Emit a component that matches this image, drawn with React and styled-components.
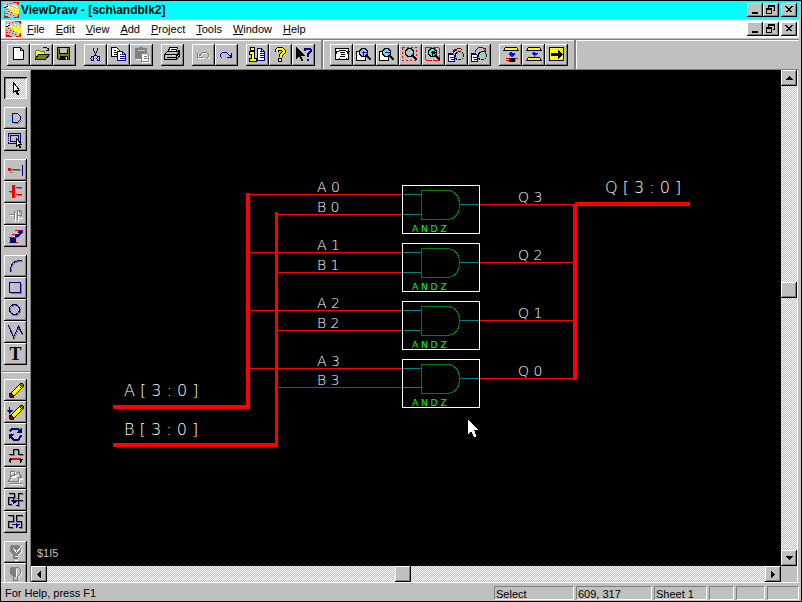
// App.jsx

import React, { useState } from 'react'
import styled, { createGlobalStyle, css } from 'styled-components'

const GlobalStyle = createGlobalStyle`
  * {
    box-sizing: border-box;
  }
  body {
    margin: 0;
    background: #000;
    font-family: 'Liberation Sans', Arial, sans-serif;
    font-size: 11px;
    color: #000;
  }
  button {
    font: inherit;
    color: inherit;
  }
`

const dither = css`
  background: repeating-conic-gradient(#fff 0 25%, #c0c0c0 0 50%) 0 0 / 2px 2px;
`

const raised = css`
  background: #c0c0c0;
  box-shadow: inset -1px -1px #000, inset 1px 1px #fff, inset -2px -2px #808080;
`

const Shell = styled.div`
  display: flex;
  flex-direction: column;
  height: 100vh;
  padding-right: 2px;
  border: 1px solid #000;
  background: #c0c0c0;
`

const TitleBar = styled.header`
  display: flex;
  align-items: center;
  flex: none;
  height: 18px;
  padding: 0 2px;
  gap: 2px;
  background: #0ff;
`

const Title = styled.h1`
  flex: 1;
  margin: 0;
  font-size: 12px;
  line-height: 18px;
`

const MenuBar = styled.nav`
  display: flex;
  align-items: center;
  flex: none;
  height: 18px;
  margin-top: 1px;
  padding: 0 2px 0 4px;
  background: #fff;
`

const MenuItems = styled.div`
  display: flex;
  flex: 1;
  padding-left: 1px;
`

const MenuItem = styled.button`
  padding: 0 6px 0 5px;
  border: none;
  background: none;
  line-height: 18px;

  &::first-letter {
    text-decoration: underline;
  }
`

const Caption = styled.div`
  display: flex;
`

const CaptionButton = styled.button`
  width: 16px;
  height: 14px;
  padding: 0;
  border: none;
  ${raised}
  margin-left: ${(p) => (p.$apart ? '2px' : '0')};

  svg {
    display: block;
  }
`

const ToolBar = styled.div`
  display: flex;
  flex: none;
  height: 31px;
  margin-top: 1px;
  border-top: 1px solid #808080;
  border-bottom: 1px solid #808080;
  box-shadow: inset 0 1px #fff;
`

const ToolStrip = styled.div`
  display: flex;
  align-items: center;
  gap: 8px;
  padding: 1px 6px 0;
  border-right: 2px solid #808080;
  box-shadow: 1px 0 #fff;

  & + & {
    border-left: 1px solid #fff;
  }
`

const ToolGroup = styled.div`
  display: flex;
  flex: none;
  flex-direction: ${(p) => (p.$vertical ? 'column' : 'row')};
`

const ToolButton = styled.button`
  flex: none;
  width: 23px;
  height: 22px;
  padding: 2px;
  border: none;
  ${raised}

  svg {
    display: block;
  }

  ${(p) =>
    p.$pressed &&
    css`
      ${dither}
      box-shadow: inset 1px 1px #000, inset -1px -1px #fff, inset 2px 2px #808080;
    `}
`

const Body = styled.main`
  display: flex;
  flex: 1;
  min-height: 0;
  border-bottom: 1px solid #fff;
`

const SideBar = styled.aside`
  display: flex;
  flex: none;
  flex-direction: column;
  gap: 8px;
  width: 30px;
  padding: 6px 3px 0;
  overflow: hidden;
  border-top: 1px solid #fff;
  border-right: 1px solid #808080;
`

const Divider = styled.hr`
  flex: none;
  align-self: stretch;
  height: 2px;
  margin: -2px -3px;
  border: none;
  border-top: 1px solid #808080;
  background: #fff;
`

const Work = styled.section`
  display: grid;
  flex: 1;
  min-width: 0;
  grid-template-columns: 1fr 16px;
  grid-template-rows: 1fr 16px;
  margin-right: 1px;
  border-right: 1px solid #fff;
`

const Sheet = styled.div`
  min-width: 0;
  min-height: 0;
  overflow: hidden;
  background: #000;

  svg {
    display: block;
  }
`

// $at is the thumb position in thousandths of the track
const ScrollBar = styled.div`
  display: grid;
  ${dither}
  ${(p) =>
    p.$vertical
      ? css`
          grid-template-rows: 16px ${p.$at}fr 16px ${1000 - p.$at}fr 16px;
        `
      : css`
          grid-template-columns: 16px ${p.$at}fr 16px ${1000 - p.$at}fr 16px;
        `}
`

const ScrollButton = styled.button`
  padding: 0;
  border: none;
  ${raised}

  svg {
    display: block;
  }
`

const Thumb = styled.div`
  ${raised}
`

const StatusBar = styled.footer`
  display: flex;
  flex: none;
  gap: 2px;
  height: 18px;
  padding: 3px 0 1px 4px;
  line-height: 15px;
`

const StatusHelp = styled.span`
  flex: 1;
`

const StatusPane = styled.span`
  width: ${(p) => p.$width}px;
  padding-left: 1px;
  border: 1px solid #fff;
  border-top-color: #808080;
  border-left-color: #808080;
  line-height: 14px;
`

const NAVY = '#000080'
const GRAY = '#808080'

// whole numbers fall on pixel centres
const Icon = ({ w = 19, h = 18, children }) => (
  <svg width={w} height={h} viewBox={`-0.5 -0.5 ${w} ${h}`} shapeRendering='crispEdges' fill='none' stroke='#000' aria-hidden='true'>
    {children}
  </svg>
)

const Logo = () => (
  <Icon w={16} h={16}>
    <path d='M0 0h15v15h-15z' fill='#c0c0c0' stroke='#c0c0c0' />
    <path d='M9 0h7M13 1h3M14 2h2M15 3h1M0 9h1M0 11h2M0 13h1M0 14h4M0 15h6M10 15h3M15 11v5M13 14h3' stroke='#f00' />
    <path d='M3 2h1M6 1h1M5 5h1M2 7h1M4 9h1M3 11h1M7 10h1M6 12h1M9 13h1M11 11h1M12 9h1M8 7h1' stroke='#f00' />
    <path d='M0 3h3M1 4h5M3 5h3' stroke='#fff' />
    <path d='M2 4h2M0 5h2' />
    <path d='M6 5l3 0l6 2v4h-3l-5 -4z' fill='#ff0' stroke='#ff0' />
    <path d='M8 3h3l4 3' stroke='#fff' />
  </Icon>
)

const Lens = ({ sign }) => (
  <>
    <circle cx='8' cy='6' r='4' fill='#c0c0c0' stroke='#000' strokeWidth='1.4' />
    <path d='M5 6l2 -3M6 4h2M9 9l2 -2' stroke='#0ff' />
    <path d='M11 9l5 5M12 9l4 4M11 10l4 4' />
    <path d={sign} stroke='#00f' />
  </>
)

const SheetLens = ({ arrow }) => (
  <>
    <path d='M1 7h4l2 2v6h-6z' fill='#fff' stroke={NAVY} />
    <path d='M1 8h4M2 11h4M3 13h3M1 15h6' stroke={NAVY} />
    <path d='M8 13l2 -2' strokeWidth='2' />
    <circle cx='12' cy='9' r='4' fill='#c0c0c0' />
    <path d='M10 10l4 -4M13 11l2 -2' stroke='#0ff' />
    <path d={arrow} stroke='#800000' />
  </>
)

const PencilShape = () => (
  <>
    <path d='M4 12l9 -9l3 3l-9 9l-4 0z' fill='#ff0' />
    <path d='M14 2h2v3l-2 -2' fill='#808000' stroke='#808000' />
    <path d='M13 2h3l1 1v2M12 4l3 3' />
    <path d='M3 12h2l2 2v2h-3l-1 -1z' fill='#800000' />
    <path d='M7 11l6 -6' stroke='#fff' />
  </>
)

// black line over a gray copy, one pixel down and right
const Shadowed = ({ d }) => (
  <>
    <path d={d} stroke={GRAY} transform='translate(1 1)' />
    <path d={d} />
  </>
)

const icons = {
  new: (
    <>
      <path d='M4 1h7l3 3v9h-10z' fill='#fff' />
      <path d='M11 1v3h3' />
    </>
  ),
  open: (
    <>
      <path d='M3 12v-7l1 -1h3l1 1h4v3' fill='#ff0' stroke='#808000' />
      <path d='M4 6h8M4 8h4M5 7h6' stroke='#fff' strokeDasharray='1 1' />
      <path d='M3 12l3 -4h11l-4 5h-10z' fill='#808000' />
      <path d='M10 2l1 -1h3l2 2M16 1v3h-3' />
    </>
  ),
  save: (
    <>
      <path d='M2 1h12v12h-11l-1 -1z' fill='#808000' />
      <path d='M5 2h6v4h-6z' fill='#c0c0c0' stroke='#c0c0c0' />
      <path d='M4 2v5h8v-5M5 10h7v3h-7z' fill='none' />
      <path d='M5 10h4v2h-4z' fill='#000' />
      <path d='M11 10v3' stroke='#c0c0c0' />
    </>
  ),
  cut: (
    <>
      <path d='M7 1v3l2 3v2M11 1v3l-2 3' />
      <path d='M9 8l-2 2M9 8l2 2' stroke={NAVY} />
      <ellipse cx='6' cy='12' rx='1.5' ry='2' stroke={NAVY} />
      <ellipse cx='12' cy='12' rx='1.5' ry='2' stroke={NAVY} />
    </>
  ),
  copy: (
    <>
      <path d='M2 1h5l3 3v6h-8z' fill='#fff' />
      <path d='M4 4h2M4 6h4M4 8h3' />
      <path d='M8 5h5l3 3v6h-8z' fill='#fff' stroke={NAVY} />
      <path d='M13 5v3h3M10 8h1M10 10h5M10 12h5' stroke={NAVY} />
    </>
  ),
  paste: (
    <>
      <path d='M3 2h3l1 -1h3l1 1h3v10h-11z' fill={GRAY} stroke={GRAY} />
      <path d='M5 4h7' stroke='#c0c0c0' />
      <path d='M9 7h5l2 2v6h-7z' fill='#fff' stroke={GRAY} />
      <path d='M11 10h3M11 12h4' stroke={GRAY} />
      <path d='M3 13h5M17 9v7h-8' stroke='#fff' />
    </>
  ),
  print: (
    <>
      <path d='M5 5l1 -4h8l-2 5' fill='#fff' />
      <path d='M7 3h5M7 5h4' />
      <path d='M1 8l3 -3h10l2 -1v6l-3 3h-12z' fill='#c0c0c0' />
      <path d='M1 8h12l3 -3M13 8v5M3 11h9M2 13h11l3 -3M14 8l1 3M15 7l1 3' />
      <path d='M8 9h3' stroke='#ff0' />
    </>
  ),
  undo: (
    <>
      <path d='M4 7v5h5M5 11l2 -2l2 -2h4l2 2v2l-2 2' stroke='#fff' />
      <path d='M3 6v5h5M4 10l2 -2l2 -2h4l2 2v2l-2 2M4 9h2M4 8h1' stroke={GRAY} />
    </>
  ),
  redo: <path d='M14 6v5h-5M13 10l-2 -2l-2 -2h-4l-2 2v2l2 2M12 10h2M13 8v2' stroke={NAVY} />,
  info: (
    <>
      <path d='M2 1h4v3h-4zM1 5h5v7h2v3h-7v-3h2v-4h-2z' fill='#ff0' />
      <path d='M9 2h4l3 3v9h-7z' fill='#fff' stroke={NAVY} />
      <path d='M13 2v3h3M11 5h1M11 7h4M11 9h4M11 11h4' stroke={NAVY} />
    </>
  ),
  help: (
    <>
      <path d='M5 5v-1l2 -2h3l2 2v2l-3 3v1' strokeWidth='4' />
      <path d='M5 5v-1l2 -2h3l2 2v2l-3 3v1' stroke='#ff0' strokeWidth='2' />
      <path d='M7 12h3v3h-3z' fill='#ff0' />
    </>
  ),
  context: (
    <>
      <path d='M2 1v11l3 -3l2 5h1l-2 -5h4z' fill='#000' />
      <path d='M10 4v-1l2 -1h2l2 1v2l-2 2l-1 1v2M13 12v2' stroke={NAVY} strokeWidth='2' />
    </>
  ),
  fit: (
    <>
      <path d='M3 2h13v11h-13z' fill='#fff' />
      <path d='M6 4h7M7 6h5M8 8h4M7 10h5M6 12h1M13 12h1' />
      <path d='M2 5h4M4 4v3M3 5v1M13 5h4M15 4v3M16 5v1' stroke={NAVY} />
    </>
  ),
  zoomIn: (
    <>
      <path d='M1 5h9v9h-9z' fill='#fff' />
      <Lens sign='M6 6h5M8 4v5' />
    </>
  ),
  zoomOut: (
    <>
      <path d='M1 5h9v9h-9z' fill='#fff' />
      <Lens sign='M6 6h5' />
    </>
  ),
  zoomArea: (
    <>
      <path d='M1 1h14v13h-14z' stroke='#f00' strokeDasharray='2 2' />
      <Lens sign='' />
    </>
  ),
  zoomFull: (
    <>
      <path d='M1 1h14v13h-14z' stroke='#f00' strokeDasharray='6 1' />
      <Lens sign='' />
      <path d='M6 6h5M8 4v5M7 5h3M7 7h3' />
    </>
  ),
  zoomSheet: <SheetLens arrow='M7 5v-1l3 -2h3l2 2M5 4h4M6 3v3M7 2v3' />,
  zoomPrev: <SheetLens arrow='M5 5v-1l3 -3h4l3 2M15 1v4h-3M14 3v2' />,
  push: (
    <>
      <path d='M2 4l2 -3h11l2 3z' fill='#ff0' />
      <path d='M7 7h6M7 8h6M8 9h4M9 10h2M10 5v5M9 5v3' stroke='#00f' />
      <path d='M4 12h12M4 14h10' stroke='#f00' />
      <path d='M8 12h5v3h-5z' fill='#000' />
    </>
  ),
  pop: (
    <>
      <path d='M2 4l2 -3h11l2 3zM2 14l2 -3h11l2 3z' fill='#ff0' />
      <path d='M10 5v5M9 5v3M7 7h6M8 8h4' stroke='#00f' />
    </>
  ),
  go: (
    <>
      <path d='M2 1h14v13h-14z' fill='#ff0' />
      <path d='M4 7h7v-3l4 4l-4 4v-3h-7z' fill='#000' />
    </>
  ),
  select: <path d='M7 3v10l2 -2l2 4h1v-1l-2 -3h3z' fill='#fff' />,
  gate: (
    <>
      <path d='M1 6h5M1 11h5M14 8h3' stroke='#0ff' />
      <path d='M7 14h5l3 -3' stroke={GRAY} />
      <path d='M6 4h5l3 3v3l-3 3h-5z' stroke={NAVY} />
    </>
  ),
  block: (
    <>
      <path d='M2 2h12v10h-12zM4 4h8v6h-8z' stroke={NAVY} />
      <path d='M2 5v5' stroke='#0ff' strokeDasharray='1 1' />
      <path d='M10 7v8l2 -2l1 3h1l-1 -3h2z' fill='#fff' />
    </>
  ),
  net: (
    <>
      <path d='M3 11h3M5 9h9' stroke={GRAY} />
      <path d='M2 7h2v2h-2zM5 8h8' fill='#f00' stroke='#f00' />
      <path d='M13 8h3' stroke='#0ff' />
      <path d='M16 3v11' stroke={NAVY} />
    </>
  ),
  bus: (
    <>
      <path d='M10 5h5M10 12h5M3 9h3' stroke={GRAY} />
      <path d='M6 2h2v12h-2zM9 4h6M9 11h6M2 8h4' fill='#f00' stroke='#f00' />
    </>
  ),
  label: (
    <>
      <path d='M3 10h6M9 7v9M12 5v11M12 13h4' stroke='#fff' />
      <path d='M2 9h6M8 5v8M11 14v-9h4v5h-4M13 4v3' stroke={GRAY} />
    </>
  ),
  array: (
    <>
      <path d='M2 10h8M2 15h9M5 7h9M8 3h8' stroke='#f00' />
      <path d='M4 11h5v4h-5z' fill={NAVY} stroke={NAVY} />
      <path d='M8 7h5M9 8h4M8 9h4M11 4h5M12 3h3M11 5h5M12 6h3' stroke='#00f' />
      <path d='M9 7h4M8 8h3M9 9h4M12 4h3M11 5h3M12 6h2' stroke={NAVY} strokeDasharray='1 1' />
    </>
  ),
  arc: (
    <>
      <path d='M5 14v-3q1 -6 8 -7h3' stroke={GRAY} />
      <path d='M4 14v-3q1 -7 8 -8h3' stroke={NAVY} />
    </>
  ),
  box: (
    <>
      <path d='M4 14h11v-10' stroke={GRAY} />
      <path d='M3 3h11v10h-11z' stroke={NAVY} />
    </>
  ),
  circle: (
    <>
      <circle cx='9' cy='9' r='5' stroke={GRAY} />
      <circle cx='8' cy='8' r='5' stroke={NAVY} />
    </>
  ),
  line: (
    <>
      <path d='M3 3l5 12l5 -11l3 8' stroke={GRAY} />
      <path d='M2 2l5 12l5 -11l4 8' stroke={NAVY} />
    </>
  ),
  text: (
    <text x='3' y='14' fill='#000' stroke='none' fontFamily='Liberation Serif, serif' fontSize='18' fontWeight='700'>
      T
    </text>
  ),
  pencil: <PencilShape />,
  pencilDown: (
    <>
      <PencilShape />
      <path d='M3 3v7M0 7h6M1 8h4M2 9h2' stroke={NAVY} />
    </>
  ),
  rotate: (
    <>
      <path d='M3 6l3 -3h5l3 3M15 10l-3 4h-5l-3 -3' stroke={NAVY} strokeWidth='2' />
      <path d='M15 3v4h-4zM3 13v-4h4z' fill={NAVY} stroke={NAVY} />
    </>
  ),
  stretch: (
    <>
      <Shadowed d='M2 7h5v-5h5v5h4' />
      <path d='M4 12h10M4 11h10' stroke='#f00' />
      <path d='M2 12h3M3 11v3M4 10v5M16 12h-2M15 11v3M14 10v5' />
    </>
  ),
  shapes: (
    <>
      <path d='M5 3h4v4h-4zM3 13l3 -5h3l4 -4l3 6h-3v4h-10zM3 15h13' stroke='#fff' />
      <path d='M4 2h4v4h-4zM2 12l3 -6h3l4 -4l3 6h-3v4h-10zM2 14h14' stroke={GRAY} />
    </>
  ),
  reroute: (
    <>
      <Shadowed d='M2 2h6v4h-6v7h3M16 2h-4v5h-2M16 9h-4v5h-3' />
      <path d='M7 6v6M4 9h7M5 10h5M6 11h3' stroke={NAVY} />
    </>
  ),
  connect: (
    <>
      <Shadowed d='M1 2h6v6h-5v6h4M16 2h-6v6h5v6h-3' />
      <path d='M5 11h8M10 9v5M11 10v3' stroke={NAVY} />
    </>
  ),
  bulb: (
    <>
      <path d='M8 15h4M8 17h3M15 5v4l-4 4' stroke='#fff' />
      <path d='M5 2h7l2 2v4l-3 3v4h-4v-4l-3 -3v-4z' fill={GRAY} stroke={GRAY} />
      <path d='M7 5l3 4l5 -6M8 13h3' stroke='#fff' />
    </>
  ),
  bulbHalf: (
    <>
      <path d='M5 2h7l2 2v4l-3 3v4h-4v-4l-3 -3v-4z' stroke={GRAY} fill='#c0c0c0' />
      <path d='M5 2h4v9h-2l-3 -3v-4z' fill={GRAY} stroke={GRAY} />
      <path d='M10 3v8M15 5v4l-4 4' stroke='#fff' />
    </>
  ),
}

const mainTools = [
  [
    ['new', 'New'],
    ['open', 'Open'],
    ['save', 'Save'],
  ],
  [
    ['cut', 'Cut'],
    ['copy', 'Copy'],
    ['paste', 'Paste', true],
  ],
  [['print', 'Print']],
  [
    ['undo', 'Undo', true],
    ['redo', 'Redo'],
  ],
  [
    ['info', 'Properties'],
    ['help', 'About'],
    ['context', 'Context help'],
  ],
]

const viewTools = [
  [
    ['fit', 'Full view'],
    ['zoomIn', 'Zoom in'],
    ['zoomOut', 'Zoom out'],
    ['zoomArea', 'Zoom area'],
    ['zoomFull', 'Zoom selected'],
    ['zoomSheet', 'Previous sheet view'],
    ['zoomPrev', 'Next sheet view'],
  ],
  [
    ['push', 'Push'],
    ['pop', 'Pop'],
    ['go', 'Next'],
  ],
]

const drawTools = [
  [['select', 'Select']],
  [
    ['gate', 'Component'],
    ['block', 'Block'],
  ],
  [
    ['net', 'Net'],
    ['bus', 'Bus'],
    ['label', 'Label', true],
    ['array', 'Array'],
  ],
  [
    ['arc', 'Arc'],
    ['box', 'Box'],
    ['circle', 'Circle'],
    ['line', 'Line'],
    ['text', 'Text'],
  ],
]

const editTools = [
  [
    ['pencil', 'Edit'],
    ['pencilDown', 'Edit down'],
    ['rotate', 'Rotate'],
    ['stretch', 'Stretch'],
    ['shapes', 'Scale', true],
    ['reroute', 'Reroute'],
    ['connect', 'Connect'],
  ],
  [
    ['bulb', 'Highlight', true],
    ['bulbHalf', 'Clear highlight', true],
  ],
]

const ToolGroups = ({ groups, vertical, active, onPick }) =>
  groups.map((group) => (
    <ToolGroup key={group[0][0]} $vertical={vertical}>
      {group.map(([name, label, disabled]) => (
        <ToolButton
          key={name}
          type='button'
          aria-label={label}
          disabled={disabled}
          $pressed={active === name}
          onClick={() => onPick && onPick(name)}
        >
          <Icon>{icons[name]}</Icon>
        </ToolButton>
      ))}
    </ToolGroup>
  ))

const WindowButtons = () => (
  <Caption>
    <CaptionButton type='button' aria-label='Minimize'>
      <Icon w={16} h={14}>
        <path d='M4 10h6M4 9h6' />
      </Icon>
    </CaptionButton>
    <CaptionButton type='button' aria-label='Restore'>
      <Icon w={16} h={14}>
        <path d='M5 5v-3h6v5h-2M5 3h6M3 5h5v5h-5zM3 6h5' />
      </Icon>
    </CaptionButton>
    <CaptionButton type='button' aria-label='Close' $apart>
      <Icon w={16} h={14}>
        <path d='M4 3l6 6M5 3l6 6M10 3l-6 6M11 3l-6 6' />
      </Icon>
    </CaptionButton>
  </Caption>
)

const ScrollArrow = ({ label, d }) => (
  <ScrollButton type='button' aria-label={label}>
    <Icon w={16} h={16}>
      <path d={d} />
    </Icon>
  </ScrollButton>
)

const Label = ({ x, y, children, size = 14, weight = 200, fill = '#fff' }) => (
  <text x={x} y={y} fontSize={size} fill={fill} fontWeight={weight} fontFamily='DejaVu Sans, sans-serif'>
    {children}
  </text>
)

const blocks = [
  { top: 185, a: 194, b: 214, out: 204 },
  { top: 243, a: 252, b: 272, out: 262 },
  { top: 301, a: 310, b: 330, out: 320 },
  { top: 359, a: 368, b: 387, out: 378 },
]

const Schematic = () => (
  <svg width='750' height='496' viewBox='31 70 750 496' shapeRendering='crispEdges' role='img' aria-label='andblk2 schematic'>
    {blocks.map(({ top, a, b, out }, i) => (
      <g key={top}>
        <rect x='250' y={a} width='152' height='1' fill='#f00' />
        <rect x='278' y={b} width='124' height='1' fill='#f00' />
        <rect x='480' y={out} width='94' height='1' fill='#f00' />
        <rect x='402.5' y={top + 0.5} width='77' height='48' fill='none' stroke='#fff' />
        <path d={`M403 ${a + 0.5}h18M403 ${b + 0.5}h18M460 ${out + 0.5}h19`} stroke='#008080' />
        <path
          d={`M421.5 ${out - 13.5}h27q11 2 11 14q0 13 -11 15h-27z`}
          fill='none'
          stroke='#008000'
        />
        <Label x={317} y={a - 2}>{`A ${i}`}</Label>
        <Label x={317} y={b - 2}>{`B ${i}`}</Label>
        <Label x={518} y={out - 2}>{`Q ${3 - i}`}</Label>
        <Label x={412} y={top + 47} size={9} weight={400} fill='#0f0'>
          A N D Z
        </Label>
      </g>
    ))}
    <path d='M113 405h133v-212h4v216h-137zM113 443h162v-231h3v235h-165zM575 202h115v4h-113v174h-4v-176h2z' fill='#f00' />
    <Label x={124} y={396} size={16}>
      A [ 3 : 0 ]
    </Label>
    <Label x={124} y={435} size={16}>
      B [ 3 : 0 ]
    </Label>
    <Label x={605} y={193} size={16}>
      Q [ 3 : 0 ]
    </Label>
    <text x='37' y='557' fill='#c0c0c0' fontSize='11'>
      $1I5
    </text>
    <path d='M468 420v14l3 -3l3 6h2v-2l-2 -5h4z' fill='#fff' />
  </svg>
)

const menus = ['File', 'Edit', 'View', 'Add', 'Project', 'Tools', 'Window', 'Help']

const App = () => {
  const [tool, setTool] = useState('select')

  return (
    <Shell>
      <GlobalStyle />
      <TitleBar>
        <Logo />
        <Title>ViewDraw - [sch\andblk2]</Title>
        <WindowButtons />
      </TitleBar>
      <MenuBar>
        <Logo />
        <MenuItems>
          {menus.map((name) => (
            <MenuItem key={name} type='button'>
              {name}
            </MenuItem>
          ))}
        </MenuItems>
        <WindowButtons />
      </MenuBar>
      <ToolBar role='toolbar'>
        <ToolStrip>
          <ToolGroups groups={mainTools} />
        </ToolStrip>
        <ToolStrip>
          <ToolGroups groups={viewTools} />
        </ToolStrip>
      </ToolBar>
      <Body>
        <SideBar>
          <ToolGroups groups={drawTools} vertical active={tool} onPick={setTool} />
          <Divider />
          <ToolGroups groups={editTools} vertical active={tool} onPick={setTool} />
        </SideBar>
        <Work>
          <Sheet>
            <Schematic />
          </Sheet>
          <ScrollBar $vertical $at={437}>
            <ScrollArrow label='Scroll up' d='M7 6h1M6 7h3M5 8h5M4 9h7' />
            <span />
            <Thumb />
            <span />
            <ScrollArrow label='Scroll down' d='M4 6h7M5 7h5M6 8h3M7 9h1' />
          </ScrollBar>
          <ScrollBar $at={496}>
            <ScrollArrow label='Scroll left' d='M6 7v1M7 6v3M8 5v5M9 4v7' />
            <span />
            <Thumb />
            <span />
            <ScrollArrow label='Scroll right' d='M6 4v7M7 5v5M8 6v3M9 7v1' />
          </ScrollBar>
        </Work>
      </Body>
      <StatusBar>
        <StatusHelp>For Help, press F1</StatusHelp>
        <StatusPane $width={80}>Select</StatusPane>
        <StatusPane $width={76}>609, 317</StatusPane>
        <StatusPane $width={53}>Sheet 1</StatusPane>
        <StatusPane $width={25} />
        <StatusPane $width={29} />
        <StatusPane $width={32} />
      </StatusBar>
    </Shell>
  )
}

export default App
